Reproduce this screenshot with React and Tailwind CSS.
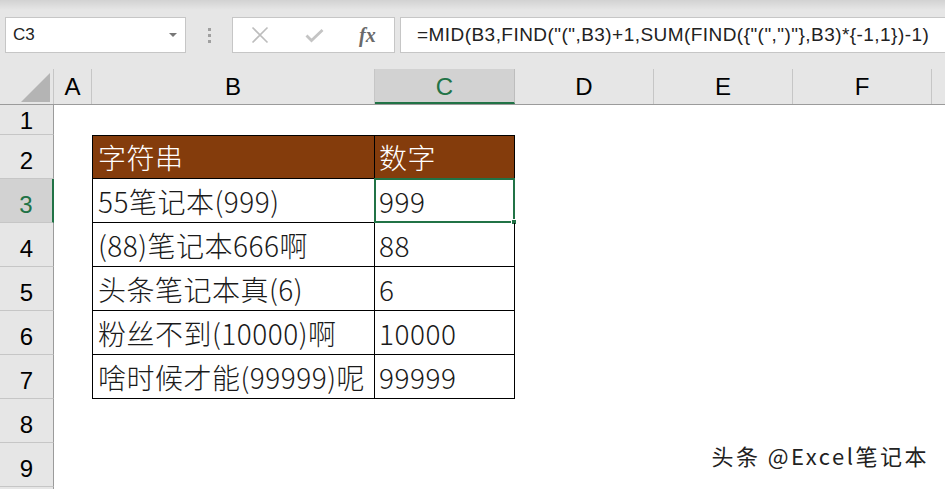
import React from 'react';

const formula = '=MID(B3,FIND("(",B3)+1,SUM(FIND({"(",")"},B3)*{-1,1})-1)';

const cols = [
    { key: 'A', w: 'w-[38px]' },
    { key: 'B', w: 'w-[283px]' },
    { key: 'C', w: 'w-[140px]' },
    { key: 'D', w: 'w-[139px]' },
    { key: 'E', w: 'w-[139px]' },
    { key: 'F', w: 'w-[139px]' },
];

const rows = [
    ['字符串', '数字'],
    ['55笔记本(999)', '999'],
    ['(88)笔记本666啊', '88'],
    ['头条笔记本真(6)', '6'],
    ['粉丝不到(10000)啊', '10000'],
    ['啥时候才能(99999)呢', '99999'],
];

const cjk = { fontFamily: '"Noto Sans CJK SC", "Noto Sans", sans-serif' };
const arial = { fontFamily: '"Liberation Sans", Arial, sans-serif' };

function FormulaBar() {
    return (
        <div className="h-[69px] bg-[#e6e6e6] relative" style={arial}>
            <div className="h-[10px] bg-gradient-to-b from-[#d2d2d2] to-[#e6e6e6]" />
            <div className="flex items-center pt-[7px] pl-[5px]">
                <div className="w-[181px] h-[36px] bg-white border border-[#c6c6c6] flex items-center justify-between pl-[7px] pr-[8px]">
                    <span className="text-[17px] text-[#222]">C3</span>
                    <svg width="8" height="5" viewBox="0 0 8 5"><path d="M0 0h8L4 4z" fill="#777" /></svg>
                </div>
                <div className="w-[46px] flex flex-col items-center gap-[3px]">
                    <span className="w-[3px] h-[3px] bg-[#a0a0a0]" />
                    <span className="w-[3px] h-[3px] bg-[#a0a0a0]" />
                    <span className="w-[3px] h-[3px] bg-[#a0a0a0]" />
                </div>
                <div className="w-[163px] h-[36px] bg-white border border-[#c6c6c6] flex items-center">
                    <svg className="ml-[18px]" width="18" height="18" viewBox="0 0 18 18">
                        <path d="M1.5 1.5l15 15M16.5 1.5l-15 15" stroke="#bdbdbd" strokeWidth="1.6" />
                    </svg>
                    <svg className="ml-[36px]" width="19" height="15" viewBox="0 0 19 15">
                        <path d="M1.5 7.5l5 5L17.5 2" stroke="#c4c4c4" strokeWidth="2.8" fill="none" />
                    </svg>
                    <span className="ml-[35px] text-[20px] italic font-bold text-[#6a6a6a]" style={{ fontFamily: '"Liberation Serif", serif' }}>fx</span>
                </div>
                <div className="ml-[5px] flex-1 h-[36px] bg-white border border-[#c6c6c6] border-r-0 flex items-center pl-[16px]">
                    <span className="text-[19px] tracking-[0.45px] text-[#222] whitespace-nowrap">{formula}</span>
                </div>
            </div>
        </div>
    );
}

function ColumnHeaders() {
    return (
        <div className="flex h-[36px] bg-[#e6e6e6] border-b border-[#9b9b9b]" style={arial}>
            <div className="w-[54px] shrink-0 border-r border-[#c6c6c6] relative">
                <svg className="absolute right-[3px] bottom-[2px]" width="29" height="29" viewBox="0 0 29 29">
                    <path d="M29 0V29H0z" fill="#b4b4b4" />
                </svg>
            </div>
            {cols.map((c) => (
                <div
                    key={c.key}
                    className={`${c.w} shrink-0 flex items-center justify-center text-[24px] border-r ${
                        c.key === 'C'
                            ? 'bg-[#d2d2d2] text-[#217346] border-b-2 border-b-[#217346] border-r-[#bdbdbd] pt-[2px]'
                            : 'text-black border-[#c6c6c6]'
                    }`}
                >
                    {c.key}
                </div>
            ))}
            <div className="flex-1" />
        </div>
    );
}

function RowHeader({ n, h }) {
    const active = n === 3;
    return (
        <div
            className={`w-[54px] shrink-0 ${h} flex items-center justify-center text-[24px] border-b border-[#c6c6c6] ${
                n === 1 ? 'pt-[2px]' : 'pt-[9px]'
            } ${active ? 'bg-[#d2d2d2] text-[#217346] border-r-2 border-r-[#217346]' : 'bg-[#e6e6e6] text-black border-r border-r-[#9b9b9b]'}`}
            style={arial}
        >
            {n <= 9 ? n : ''}
        </div>
    );
}

function SheetRow({ n }) {
    const h = n === 1 ? 'h-[30px]' : 'h-[44px]';
    const data = n >= 2 && n <= 7 ? rows[n - 2] : null;
    const head = n === 2;
    return (
        <div className="flex bg-white">
            <RowHeader n={n} h={h} />
            <div className={`w-[38px] shrink-0 ${h}`} />
            {data ? (
                <>
                    <div
                        className={`w-[283px] shrink-0 ${h} border-l border-r border-b border-black ${head ? 'border-t bg-[#843c0c] text-white' : 'text-[#1a1a1a]'} flex items-center pl-[5px] text-[28px] font-light whitespace-nowrap tracking-[0.5px]`}
                        style={cjk}
                    >
                        {data[0]}
                    </div>
                    <div
                        className={`w-[140px] shrink-0 ${h} relative border-r border-b border-black ${head ? 'border-t bg-[#843c0c] text-white' : 'text-[#1a1a1a]'} flex items-center pl-[4px] text-[28px] font-light tracking-[0.5px]`}
                        style={cjk}
                    >
                        {data[1]}
                        {n === 3 && (
                            <div className="absolute -left-[1px] -top-[1px] -right-[1px] -bottom-[1px] border-2 border-[#217346]">
                                <div className="absolute -right-[4px] -bottom-[4px] w-[6px] h-[6px] bg-[#217346] border border-white" />
                            </div>
                        )}
                    </div>
                </>
            ) : (
                <div className={`w-[423px] shrink-0 ${h}`} />
            )}
            <div className={`flex-1 ${h}`} />
        </div>
    );
}

export default function App() {
    return (
        <div className="w-[945px] h-[489px] overflow-hidden bg-white relative">
            <FormulaBar />
            <ColumnHeaders />
            {[1, 2, 3, 4, 5, 6, 7, 8, 9, 10].map((n) => (
                <SheetRow key={n} n={n} />
            ))}
            <div
                className="absolute right-[16px] bottom-[17px] text-[22px] tracking-[2.5px] text-[#222] whitespace-nowrap"
                style={{ ...cjk, textShadow: '1px 1px 0 #fff, -1px -1px 0 #fff' }}
            >
                头条 @Excel笔记本
            </div>
        </div>
    );
}
